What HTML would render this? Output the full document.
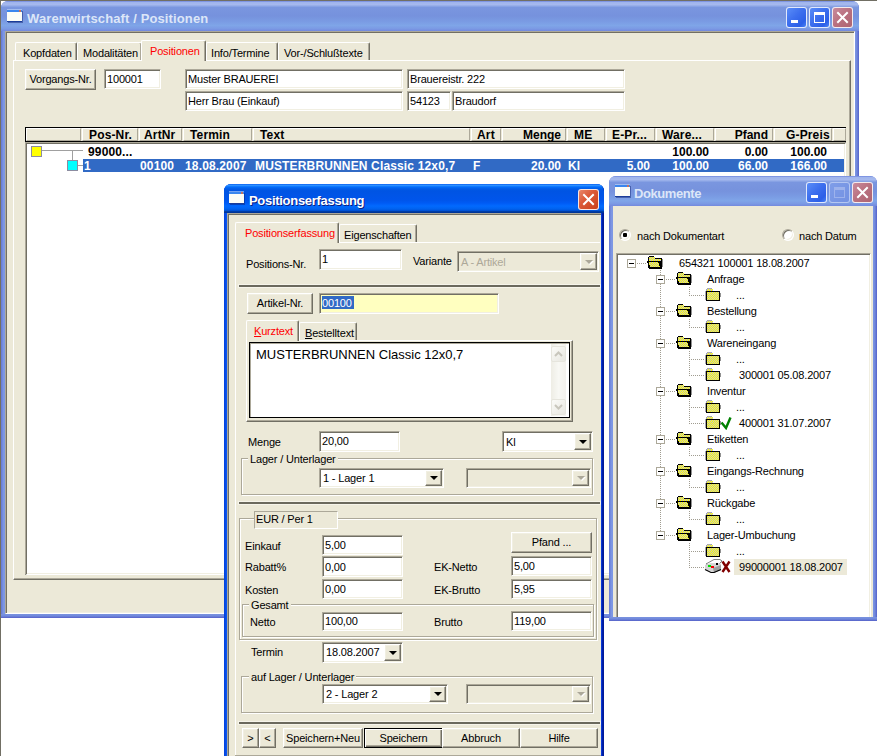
<!DOCTYPE html><html><head><meta charset="utf-8"><style>
html,body{margin:0;padding:0;}
body{width:877px;height:756px;overflow:hidden;position:relative;background:#fff;font-family:"Liberation Sans",sans-serif;font-size:11px;color:#000;}
div,span,svg{position:absolute;box-sizing:border-box;}
.ta{background:linear-gradient(to bottom,#0058EE 0%,#3593FF 4%,#288EFF 6%,#127DFF 8%,#036FFC 10%,#0262EE 14%,#0057E5 20%,#0054E3 24%,#0055EB 56%,#005BF5 66%,#026AFE 76%,#0062EF 86%,#0052D6 92%,#0040AB 94%,#003092 100%);}
.ti{background:linear-gradient(to bottom,#6F86DE 0%,#A0B5EC 5%,#A6B9EE 12%,#8FA8E6 17%,#7A96DF 21%,#7692DD 50%,#7A9BE3 68%,#7FA5E8 82%,#7B9AE4 92%,#7389DE 100%);}
</style></head><body>

<div style="left:0px;top:0px;width:877px;height:1px;background:#716F64;"></div>
<div style="left:0px;top:0px;width:1px;height:756px;background:#716F64;"></div>
<div style="left:1px;top:1px;width:858px;height:617px;background:#7A93DF;border-radius:7px 7px 0 0;overflow:hidden;"><div style="left:0;top:0;width:4px;height:617px;background:linear-gradient(to right,#6479D6,#7C95E2 60%,#7E98E4);"></div><div style="left:854px;top:0;width:4px;height:617px;background:linear-gradient(to right,#7E98E4,#6F86DB 50%,#5462C9);"></div><div style="left:0;top:613px;width:858px;height:4px;background:linear-gradient(to bottom,#7A93DF,#7089DC 50%,#5560C8);"></div><div class="ti" style="left:0;top:0;width:858px;height:30px;"></div></div>
<div style="left:5px;top:31px;width:850px;height:583px;background:#ECE9D8;border-top:1px solid #ACA899;border-left:1px solid #ACA899;border-right:1px solid #fff;border-bottom:1px solid #fff;box-shadow:inset 1px 1px #716F64,inset -1px -1px #F1EFE2;"></div>
<div style="left:7px;top:10px;width:15px;height:12px;background:#FCFDF7;border-top:2px solid #3A86EE;border-bottom:1px solid #1A3C9A;box-shadow:1px 1px 0 rgba(10,30,110,0.45),0 -1px 0 rgba(190,215,250,0.6);"></div><div style="left:19px;top:10px;width:2px;height:2px;background:#F06A30;border-radius:1px"></div>
<div style="left:27px;top:11px;font-size:13px;line-height:15px;color:#DCE6F8;font-weight:bold;-webkit-text-stroke:0;white-space:nowrap;letter-spacing:0.12px;">Warenwirtschaft / Positionen</div>
<div style="left:786px;top:7px;width:21px;height:21px;background:linear-gradient(135deg,#5A8DF8 0%,#3D6FEE 45%,#2C5FE8 80%,#4B84F5 100%);border:1px solid rgba(255,255,255,0.85);border-radius:3px;overflow:hidden;"><div style="left:4px;top:12px;width:7px;height:3px;background:#fff"></div></div>
<div style="left:809px;top:7px;width:21px;height:21px;background:linear-gradient(135deg,#5A8DF8 0%,#3D6FEE 45%,#2C5FE8 80%,#4B84F5 100%);border:1px solid rgba(255,255,255,0.85);border-radius:3px;overflow:hidden;"><div style="left:4px;top:4px;width:11px;height:11px;border:1px solid #fff;border-top-width:3px;"></div></div>
<div style="left:832px;top:7px;width:21px;height:21px;background:linear-gradient(135deg,#C98A9C 0%,#B9707F 50%,#AE6572 100%);border:1px solid rgba(255,255,255,0.85);border-radius:3px;overflow:hidden;"><svg style="left:-1px;top:-1px" width="21" height="21"><path d="M6 6 L15 15 M15 6 L6 15" stroke="#fff" stroke-width="2" stroke-linecap="square"/></svg></div>
<div style="left:13px;top:60px;width:838px;height:520px;border-left:1px solid #fff;border-top:1px solid #fff;border-right:1px solid #716F64;border-bottom:1px solid #716F64;box-shadow:inset -1px -1px #ACA899;"></div>
<div style="left:15px;top:42px;width:62px;height:18px;background:#ECE9D8;border-left:1px solid #fff;border-top:1px solid #fff;border-right:1px solid #716F64;box-shadow:inset -1px 0 #ACA899;border-radius:2px 2px 0 0;"></div>
<div style="left:23px;top:47px;font-size:11px;line-height:13px;color:#000;white-space:nowrap;letter-spacing:-0.17px;">Kopfdaten</div>
<div style="left:77px;top:42px;width:65px;height:18px;background:#ECE9D8;border-left:1px solid #fff;border-top:1px solid #fff;border-right:1px solid #716F64;box-shadow:inset -1px 0 #ACA899;border-radius:2px 2px 0 0;"></div>
<div style="left:83px;top:47px;font-size:11px;line-height:13px;color:#000;white-space:nowrap;letter-spacing:-0.17px;">Modalitäten</div>
<div style="left:206px;top:42px;width:72px;height:18px;background:#ECE9D8;border-left:1px solid #fff;border-top:1px solid #fff;border-right:1px solid #716F64;box-shadow:inset -1px 0 #ACA899;border-radius:2px 2px 0 0;"></div>
<div style="left:211px;top:47px;font-size:11px;line-height:13px;color:#000;white-space:nowrap;letter-spacing:-0.17px;">Info/Termine</div>
<div style="left:278px;top:42px;width:92px;height:18px;background:#ECE9D8;border-left:1px solid #fff;border-top:1px solid #fff;border-right:1px solid #716F64;box-shadow:inset -1px 0 #ACA899;border-radius:2px 2px 0 0;"></div>
<div style="left:284px;top:47px;font-size:11px;line-height:13px;color:#000;white-space:nowrap;letter-spacing:-0.17px;">Vor-/Schlußtexte</div>
<div style="left:141px;top:40px;width:65px;height:21px;background:#ECE9D8;border-left:1px solid #fff;border-top:1px solid #fff;border-right:1px solid #716F64;box-shadow:inset -1px 0 #ACA899;border-radius:2px 2px 0 0;"></div>
<div style="left:150px;top:45px;font-size:11px;line-height:13px;color:#FF0000;white-space:nowrap;letter-spacing:-0.17px;">Positionen</div>
<div style="left:25px;top:69px;width:71px;height:21px;background:#ECE9D8;border:1px solid;border-color:#fff #716F64 #716F64 #fff;box-shadow:inset -1px -1px #ACA899,inset 1px 1px #F1EFE2;"></div>
<div style="left:25px;width:71px;text-align:center;top:73px;font-size:11px;line-height:13px;color:#000;white-space:nowrap;letter-spacing:-0.17px;">Vorgangs-Nr.</div>
<div style="left:104px;top:69px;width:57px;height:20px;background:#fff;border:1px solid;border-color:#ACA899 #fff #fff #ACA899;box-shadow:inset 1px 1px #716F64,inset -1px -1px #F1EFE2;background:#fff;"></div>
<div style="left:107px;top:73px;font-size:11px;line-height:13px;color:#000;white-space:nowrap;letter-spacing:-0.17px;">100001</div>
<div style="left:185px;top:69px;width:218px;height:20px;background:#fff;border:1px solid;border-color:#ACA899 #fff #fff #ACA899;box-shadow:inset 1px 1px #716F64,inset -1px -1px #F1EFE2;background:#fff;"></div>
<div style="left:188px;top:73px;font-size:11px;line-height:13px;color:#000;white-space:nowrap;letter-spacing:-0.17px;">Muster BRAUEREI</div>
<div style="left:407px;top:69px;width:218px;height:20px;background:#fff;border:1px solid;border-color:#ACA899 #fff #fff #ACA899;box-shadow:inset 1px 1px #716F64,inset -1px -1px #F1EFE2;background:#fff;"></div>
<div style="left:410px;top:73px;font-size:11px;line-height:13px;color:#000;white-space:nowrap;letter-spacing:-0.17px;">Brauereistr. 222</div>
<div style="left:185px;top:91px;width:218px;height:20px;background:#fff;border:1px solid;border-color:#ACA899 #fff #fff #ACA899;box-shadow:inset 1px 1px #716F64,inset -1px -1px #F1EFE2;background:#fff;"></div>
<div style="left:188px;top:95px;font-size:11px;line-height:13px;color:#000;white-space:nowrap;letter-spacing:-0.17px;">Herr Brau (Einkauf)</div>
<div style="left:407px;top:91px;width:44px;height:20px;background:#fff;border:1px solid;border-color:#ACA899 #fff #fff #ACA899;box-shadow:inset 1px 1px #716F64,inset -1px -1px #F1EFE2;background:#fff;"></div>
<div style="left:410px;top:95px;font-size:11px;line-height:13px;color:#000;white-space:nowrap;letter-spacing:-0.17px;">54123</div>
<div style="left:452px;top:91px;width:173px;height:20px;background:#fff;border:1px solid;border-color:#ACA899 #fff #fff #ACA899;box-shadow:inset 1px 1px #716F64,inset -1px -1px #F1EFE2;background:#fff;"></div>
<div style="left:455px;top:95px;font-size:11px;line-height:13px;color:#000;white-space:nowrap;letter-spacing:-0.17px;">Braudorf</div>
<div style="left:25px;top:142px;width:821px;height:433px;background:#fff;border-left:2px solid #716F64;border-top:2px solid #716F64;border-right:1px solid #fff;border-bottom:1px solid #fff;box-shadow:inset -1px -1px #F1EFE2;"></div>
<div style="left:25px;top:142px;width:1px;height:432px;background:#ACA899"></div><div style="left:25px;top:142px;width:820px;height:1px;background:#ACA899"></div>
<div style="left:25px;top:127px;width:821px;height:15px;background:#ECE9D8;border:1px solid #000;"></div>
<div style="left:26px;top:128px;width:55px;height:13px;border-left:1px solid #fff;border-top:1px solid #fff;border-right:1px solid #ACA899;border-bottom:1px solid #ACA899;"></div>
<div style="left:82px;top:128px;width:56px;height:13px;border-left:1px solid #fff;border-top:1px solid #fff;border-right:1px solid #ACA899;border-bottom:1px solid #ACA899;"></div>
<div style="left:139px;top:128px;width:43px;height:13px;border-left:1px solid #fff;border-top:1px solid #fff;border-right:1px solid #ACA899;border-bottom:1px solid #ACA899;"></div>
<div style="left:183px;top:128px;width:69px;height:13px;border-left:1px solid #fff;border-top:1px solid #fff;border-right:1px solid #ACA899;border-bottom:1px solid #ACA899;"></div>
<div style="left:253px;top:128px;width:217px;height:13px;border-left:1px solid #fff;border-top:1px solid #fff;border-right:1px solid #ACA899;border-bottom:1px solid #ACA899;"></div>
<div style="left:471px;top:128px;width:30px;height:13px;border-left:1px solid #fff;border-top:1px solid #fff;border-right:1px solid #ACA899;border-bottom:1px solid #ACA899;"></div>
<div style="left:502px;top:128px;width:64px;height:13px;border-left:1px solid #fff;border-top:1px solid #fff;border-right:1px solid #ACA899;border-bottom:1px solid #ACA899;"></div>
<div style="left:567px;top:128px;width:38px;height:13px;border-left:1px solid #fff;border-top:1px solid #fff;border-right:1px solid #ACA899;border-bottom:1px solid #ACA899;"></div>
<div style="left:606px;top:128px;width:49px;height:13px;border-left:1px solid #fff;border-top:1px solid #fff;border-right:1px solid #ACA899;border-bottom:1px solid #ACA899;"></div>
<div style="left:656px;top:128px;width:58px;height:13px;border-left:1px solid #fff;border-top:1px solid #fff;border-right:1px solid #ACA899;border-bottom:1px solid #ACA899;"></div>
<div style="left:715px;top:128px;width:58px;height:13px;border-left:1px solid #fff;border-top:1px solid #fff;border-right:1px solid #ACA899;border-bottom:1px solid #ACA899;"></div>
<div style="left:774px;top:128px;width:58px;height:13px;border-left:1px solid #fff;border-top:1px solid #fff;border-right:1px solid #ACA899;border-bottom:1px solid #ACA899;"></div>
<div style="left:833px;top:128px;width:13px;height:13px;border-left:1px solid #fff;border-top:1px solid #fff;border-right:1px solid #ACA899;border-bottom:1px solid #ACA899;"></div>
<div style="left:89px;top:128px;font-size:12px;line-height:14px;color:#000;font-weight:bold;-webkit-text-stroke:0;white-space:nowrap;letter-spacing:0.15px;">Pos-Nr.</div>
<div style="left:144px;top:128px;font-size:12px;line-height:14px;color:#000;font-weight:bold;-webkit-text-stroke:0;white-space:nowrap;letter-spacing:0.15px;">ArtNr</div>
<div style="left:190px;top:128px;font-size:12px;line-height:14px;color:#000;font-weight:bold;-webkit-text-stroke:0;white-space:nowrap;letter-spacing:0.15px;">Termin</div>
<div style="left:260px;top:128px;font-size:12px;line-height:14px;color:#000;font-weight:bold;-webkit-text-stroke:0;white-space:nowrap;letter-spacing:0.15px;">Text</div>
<div style="left:477px;top:128px;font-size:12px;line-height:14px;color:#000;font-weight:bold;-webkit-text-stroke:0;white-space:nowrap;letter-spacing:0.15px;">Art</div>
<div style="left:574px;top:128px;font-size:12px;line-height:14px;color:#000;font-weight:bold;-webkit-text-stroke:0;white-space:nowrap;letter-spacing:0.15px;">ME</div>
<div style="left:612px;top:128px;font-size:12px;line-height:14px;color:#000;font-weight:bold;-webkit-text-stroke:0;white-space:nowrap;letter-spacing:0.15px;">E-Pr...</div>
<div style="left:662px;top:128px;font-size:12px;line-height:14px;color:#000;font-weight:bold;-webkit-text-stroke:0;white-space:nowrap;letter-spacing:0.15px;">Ware...</div>
<div style="left:786px;top:128px;font-size:12px;line-height:14px;color:#000;font-weight:bold;-webkit-text-stroke:0;white-space:nowrap;letter-spacing:0.15px;">G-Preis</div>
<div style="left:261px;width:300px;text-align:right;top:128px;font-size:12px;line-height:14px;color:#000;font-weight:bold;-webkit-text-stroke:0;white-space:nowrap;">Menge</div>
<div style="left:468px;width:300px;text-align:right;top:128px;font-size:12px;line-height:14px;color:#000;font-weight:bold;-webkit-text-stroke:0;white-space:nowrap;">Pfand</div>
<div style="left:31px;top:146px;width:11px;height:11px;background:#FFFF00;border:1px solid #8C8CA0;"></div>
<div style="left:42px;top:150px;width:41px;height:1px;background:#A0A0A0;"></div>
<div style="left:72px;top:151px;width:1px;height:9px;background:#A0A0A0;"></div>
<div style="left:67px;top:160px;width:11px;height:11px;background:#00FFFF;border:1px solid #8C8CA0;"></div>
<div style="left:78px;top:165px;width:5px;height:1px;background:#A0A0A0;"></div>
<div style="left:88px;top:145px;font-size:12px;line-height:14px;color:#000;font-weight:bold;-webkit-text-stroke:0;white-space:nowrap;letter-spacing:0.15px;">99000...</div>
<div style="left:409px;width:300px;text-align:right;top:145px;font-size:12px;line-height:14px;color:#000;font-weight:bold;-webkit-text-stroke:0;white-space:nowrap;">100.00</div>
<div style="left:468px;width:300px;text-align:right;top:145px;font-size:12px;line-height:14px;color:#000;font-weight:bold;-webkit-text-stroke:0;white-space:nowrap;">0.00</div>
<div style="left:527px;width:300px;text-align:right;top:145px;font-size:12px;line-height:14px;color:#000;font-weight:bold;-webkit-text-stroke:0;white-space:nowrap;">100.00</div>
<div style="left:83px;top:159px;width:761px;height:13px;background:#316AC5;"></div>
<div style="left:84px;top:159px;font-size:12px;line-height:14px;color:#fff;font-weight:bold;-webkit-text-stroke:0;white-space:nowrap;letter-spacing:0.15px;">1</div>
<div style="left:140px;top:159px;font-size:12px;line-height:14px;color:#fff;font-weight:bold;-webkit-text-stroke:0;white-space:nowrap;letter-spacing:0.15px;">00100</div>
<div style="left:185px;top:159px;font-size:12px;line-height:14px;color:#fff;font-weight:bold;-webkit-text-stroke:0;white-space:nowrap;letter-spacing:0.15px;">18.08.2007</div>
<div style="left:255px;top:159px;font-size:12px;line-height:14px;color:#fff;font-weight:bold;-webkit-text-stroke:0;white-space:nowrap;letter-spacing:0.15px;">MUSTERBRUNNEN Classic 12x0,7</div>
<div style="left:473px;top:159px;font-size:12px;line-height:14px;color:#fff;font-weight:bold;-webkit-text-stroke:0;white-space:nowrap;letter-spacing:0.15px;">F</div>
<div style="left:261px;width:300px;text-align:right;top:159px;font-size:12px;line-height:14px;color:#fff;font-weight:bold;-webkit-text-stroke:0;white-space:nowrap;">20.00</div>
<div style="left:568px;top:159px;font-size:12px;line-height:14px;color:#fff;font-weight:bold;-webkit-text-stroke:0;white-space:nowrap;letter-spacing:0.15px;">Kl</div>
<div style="left:350px;width:300px;text-align:right;top:159px;font-size:12px;line-height:14px;color:#fff;font-weight:bold;-webkit-text-stroke:0;white-space:nowrap;">5.00</div>
<div style="left:409px;width:300px;text-align:right;top:159px;font-size:12px;line-height:14px;color:#fff;font-weight:bold;-webkit-text-stroke:0;white-space:nowrap;">100.00</div>
<div style="left:468px;width:300px;text-align:right;top:159px;font-size:12px;line-height:14px;color:#fff;font-weight:bold;-webkit-text-stroke:0;white-space:nowrap;">66.00</div>
<div style="left:527px;width:300px;text-align:right;top:159px;font-size:12px;line-height:14px;color:#fff;font-weight:bold;-webkit-text-stroke:0;white-space:nowrap;">166.00</div>
<div style="left:224px;top:184px;width:380px;height:600px;background:#0848EA;border-radius:7px 7px 0 0;overflow:hidden;"><div class="ta" style="left:0;top:0;width:380px;height:29px;"></div><div style="left:377px;top:0;width:3px;height:600px;background:linear-gradient(to right,#0A4AF0,#0020B0 40%,#001890);"></div><div style="left:0;top:0;width:3px;height:600px;background:linear-gradient(to right,#0440D8,#0A58F5);"></div><div class="ta" style="left:0;top:0;width:380px;height:29px;border-radius:7px 7px 0 0"></div></div>
<div style="left:227px;top:213px;width:374px;height:560px;background:#ECE9D8;border-top:1px solid #ACA899;border-left:1px solid #ACA899;box-shadow:inset 1px 1px #716F64;"></div>
<div style="left:229px;top:192px;width:15px;height:12px;background:#FCFDF7;border-top:2px solid #3A86EE;border-bottom:1px solid #1A3C9A;box-shadow:1px 1px 0 rgba(10,30,110,0.45),0 -1px 0 rgba(190,215,250,0.6);"></div><div style="left:241px;top:192px;width:2px;height:2px;background:#F06A30;border-radius:1px"></div>
<div style="left:249px;top:193px;font-size:13px;line-height:15px;font-weight:bold;-webkit-text-stroke:0;color:#fff;white-space:nowrap;letter-spacing:-0.3px;text-shadow:1px 1px #0A1E80;">Positionserfassung</div>
<div style="left:578px;top:189px;width:21px;height:21px;background:linear-gradient(135deg,#E8876B 0%,#DC5B3A 40%,#C9401A 100%);border:1px solid rgba(255,255,255,0.85);border-radius:3px;overflow:hidden;"><svg style="left:-1px;top:-1px" width="21" height="21"><path d="M6 6 L15 15 M15 6 L6 15" stroke="#fff" stroke-width="2" stroke-linecap="square"/></svg></div>
<div style="left:235px;top:242px;width:365px;height:520px;border-left:1px solid #fff;border-top:1px solid #fff;"></div>
<div style="left:339px;top:224px;width:78px;height:18px;background:#ECE9D8;border-left:1px solid #fff;border-top:1px solid #fff;border-right:1px solid #716F64;box-shadow:inset -1px 0 #ACA899;border-radius:2px 2px 0 0;"></div>
<div style="left:344px;top:229px;font-size:11px;line-height:13px;color:#000;white-space:nowrap;letter-spacing:-0.17px;">Eigenschaften</div>
<div style="left:235px;top:222px;width:104px;height:21px;background:#ECE9D8;border-left:1px solid #fff;border-top:1px solid #fff;border-right:1px solid #716F64;box-shadow:inset -1px 0 #ACA899;border-radius:2px 2px 0 0;"></div>
<div style="left:245px;top:227px;font-size:11px;line-height:13px;color:#FF0000;white-space:nowrap;letter-spacing:-0.17px;">Positionserfassung</div>
<div style="left:246px;top:258px;font-size:11px;line-height:13px;color:#000;white-space:nowrap;letter-spacing:-0.17px;">Positions-Nr.</div>
<div style="left:319px;top:249px;width:83px;height:21px;background:#fff;border:1px solid;border-color:#ACA899 #fff #fff #ACA899;box-shadow:inset 1px 1px #716F64,inset -1px -1px #F1EFE2;background:#fff;"></div>
<div style="left:322px;top:253px;font-size:11px;line-height:13px;color:#000;white-space:nowrap;letter-spacing:-0.17px;">1</div>
<div style="left:413px;top:255px;font-size:11px;line-height:13px;color:#000;white-space:nowrap;letter-spacing:-0.17px;">Variante</div>
<div style="left:457px;top:251px;width:142px;height:21px;background:#fff;border:1px solid;border-color:#ACA899 #fff #fff #ACA899;box-shadow:inset 1px 1px #716F64,inset -1px -1px #F1EFE2;background:#ECE9D8;"></div>
<div style="left:580px;top:253px;width:17px;height:17px;background:#ECE9D8;border:1px solid;border-color:#fff #716F64 #716F64 #fff;box-shadow:inset -1px -1px #ACA899,inset 1px 1px #F1EFE2;"></div>
<div style="left:586px;top:261px;width:0;height:0;border-left:4px solid transparent;border-right:4px solid transparent;border-top:4px solid #fff;"></div>
<div style="left:585px;top:260px;width:0;height:0;border-left:4px solid transparent;border-right:4px solid transparent;border-top:4px solid #ACA899;"></div>
<div style="left:461px;top:256px;font-size:11px;line-height:13px;color:#ACA899;white-space:nowrap;letter-spacing:-0.17px;">A - Artikel</div>
<div style="left:238px;top:284px;width:363px;height:4px;background:#F6F4EA;"></div>
<div style="left:239px;top:285px;width:361px;height:2px;background:#6B695D;"></div>
<div style="left:247px;top:293px;width:66px;height:21px;background:#ECE9D8;border:1px solid;border-color:#fff #716F64 #716F64 #fff;box-shadow:inset -1px -1px #ACA899,inset 1px 1px #F1EFE2;"></div>
<div style="left:247px;width:66px;text-align:center;top:297px;font-size:11px;line-height:13px;color:#000;white-space:nowrap;letter-spacing:-0.17px;">Artikel-Nr.</div>
<div style="left:319px;top:293px;width:180px;height:21px;background:#fff;border:1px solid;border-color:#ACA899 #fff #fff #ACA899;box-shadow:inset 1px 1px #716F64,inset -1px -1px #F1EFE2;background:#FFFFC0;"></div>
<div style="left:322px;top:296px;width:32px;height:13px;background:#316AC5;"></div>
<div style="left:322px;top:297px;font-size:11px;line-height:13px;color:#fff;white-space:nowrap;letter-spacing:-0.17px;">00100</div>
<div style="left:246px;top:340px;width:327px;height:82px;border-left:1px solid #fff;border-top:1px solid #fff;border-right:1px solid #716F64;border-bottom:1px solid #716F64;box-shadow:inset -1px -1px #ACA899;"></div>
<div style="left:299px;top:322px;width:58px;height:18px;background:#ECE9D8;border-left:1px solid #fff;border-top:1px solid #fff;border-right:1px solid #716F64;box-shadow:inset -1px 0 #ACA899;border-radius:2px 2px 0 0;"></div>
<div style="left:305px;top:327px;font-size:11px;line-height:13px;color:#000;white-space:nowrap;letter-spacing:-0.17px;"><u>B</u>estelltext</div>
<div style="left:246px;top:320px;width:53px;height:21px;background:#ECE9D8;border-left:1px solid #fff;border-top:1px solid #fff;border-right:1px solid #716F64;box-shadow:inset -1px 0 #ACA899;border-radius:2px 2px 0 0;"></div>
<div style="left:254px;top:325px;font-size:11px;line-height:13px;color:#FF0000;white-space:nowrap;letter-spacing:-0.17px;"><u>K</u>urztext</div>
<div style="left:249px;top:342px;width:321px;height:76px;background:#fff;border:1px solid #000;box-shadow:inset 1px 1px #ACA899;"></div>
<div style="left:256px;top:347px;font-size:13px;line-height:15px;color:#000;white-space:nowrap;letter-spacing:0px;">MUSTERBRUNNEN Classic 12x0,7</div>
<div style="left:551px;top:344px;width:15px;height:72px;background:linear-gradient(to right,#EEEDE5,#F8F8F4 50%,#F3F1EC);"></div>
<div style="left:551px;top:346px;width:15px;height:16px;background:linear-gradient(135deg,#FBFBF8,#E8E7E0);border:1px solid #E6E5DD;border-radius:2px;"></div>
<svg style="left:551px;top:346px" width="15" height="16"><path d="M4 10 L7.5 6.5 L11 10" stroke="#C8C6BC" stroke-width="2" fill="none"/></svg>
<div style="left:551px;top:399px;width:15px;height:16px;background:linear-gradient(135deg,#FBFBF8,#E8E7E0);border:1px solid #E6E5DD;border-radius:2px;"></div>
<svg style="left:551px;top:399px" width="15" height="16"><path d="M4 6 L7.5 9.5 L11 6" stroke="#C8C6BC" stroke-width="2" fill="none"/></svg>
<div style="left:248px;top:436px;font-size:11px;line-height:13px;color:#000;white-space:nowrap;letter-spacing:-0.17px;">Menge</div>
<div style="left:319px;top:431px;width:81px;height:21px;background:#fff;border:1px solid;border-color:#ACA899 #fff #fff #ACA899;box-shadow:inset 1px 1px #716F64,inset -1px -1px #F1EFE2;background:#fff;"></div>
<div style="left:322px;top:435px;font-size:11px;line-height:13px;color:#000;white-space:nowrap;letter-spacing:-0.17px;">20,00</div>
<div style="left:502px;top:431px;width:91px;height:21px;background:#fff;border:1px solid;border-color:#ACA899 #fff #fff #ACA899;box-shadow:inset 1px 1px #716F64,inset -1px -1px #F1EFE2;background:#fff;"></div>
<div style="left:574px;top:433px;width:17px;height:17px;background:#ECE9D8;border:1px solid;border-color:#fff #716F64 #716F64 #fff;box-shadow:inset -1px -1px #ACA899,inset 1px 1px #F1EFE2;"></div>
<div style="left:579px;top:440px;width:0;height:0;border-left:4px solid transparent;border-right:4px solid transparent;border-top:4px solid #000;"></div>
<div style="left:506px;top:436px;font-size:11px;line-height:13px;color:#000;white-space:nowrap;letter-spacing:-0.17px;">Kl</div>
<div style="left:241px;top:458px;width:352px;height:37px;border:1px solid #ACA899;box-shadow:inset 1px 1px #fff,1px 1px #fff;"></div>
<div style="left:248px;top:453px;height:10px;background:#ECE9D8;padding:0 2px;font-size:11px;line-height:13px;white-space:nowrap;letter-spacing:-0.17px;color:transparent">Lager / Unterlager</div>
<div style="left:250px;top:453px;font-size:11px;line-height:13px;color:#000;white-space:nowrap;letter-spacing:-0.17px;">Lager / Unterlager</div>
<div style="left:319px;top:468px;width:125px;height:20px;background:#fff;border:1px solid;border-color:#ACA899 #fff #fff #ACA899;box-shadow:inset 1px 1px #716F64,inset -1px -1px #F1EFE2;background:#fff;"></div>
<div style="left:425px;top:470px;width:17px;height:16px;background:#ECE9D8;border:1px solid;border-color:#fff #716F64 #716F64 #fff;box-shadow:inset -1px -1px #ACA899,inset 1px 1px #F1EFE2;"></div>
<div style="left:430px;top:476px;width:0;height:0;border-left:4px solid transparent;border-right:4px solid transparent;border-top:4px solid #000;"></div>
<div style="left:323px;top:472px;font-size:11px;line-height:13px;color:#000;white-space:nowrap;letter-spacing:-0.17px;">1 - Lager 1</div>
<div style="left:466px;top:468px;width:125px;height:20px;background:#fff;border:1px solid;border-color:#ACA899 #fff #fff #ACA899;box-shadow:inset 1px 1px #716F64,inset -1px -1px #F1EFE2;background:#ECE9D8;"></div>
<div style="left:572px;top:470px;width:17px;height:16px;background:#ECE9D8;border:1px solid;border-color:#fff #716F64 #716F64 #fff;box-shadow:inset -1px -1px #ACA899,inset 1px 1px #F1EFE2;"></div>
<div style="left:578px;top:477px;width:0;height:0;border-left:4px solid transparent;border-right:4px solid transparent;border-top:4px solid #fff;"></div>
<div style="left:577px;top:476px;width:0;height:0;border-left:4px solid transparent;border-right:4px solid transparent;border-top:4px solid #ACA899;"></div>
<div style="left:238px;top:501px;width:363px;height:4px;background:#F6F4EA;"></div>
<div style="left:239px;top:502px;width:361px;height:2px;background:#6B695D;"></div>
<div style="left:239px;top:518px;width:358px;height:122px;border:1px solid #ACA899;box-shadow:inset 1px 1px #fff,1px 1px #fff;"></div>
<div style="left:254px;top:511px;width:84px;height:18px;background:#ECE9D8;border:1px solid;border-color:#ACA899 #fff #fff #ACA899;"></div>
<div style="left:256px;top:513px;font-size:11px;line-height:13px;color:#000;white-space:nowrap;letter-spacing:-0.17px;">EUR / Per 1</div>
<div style="left:245px;top:540px;font-size:11px;line-height:13px;color:#000;white-space:nowrap;letter-spacing:-0.17px;">Einkauf</div>
<div style="left:322px;top:535px;width:81px;height:20px;background:#fff;border:1px solid;border-color:#ACA899 #fff #fff #ACA899;box-shadow:inset 1px 1px #716F64,inset -1px -1px #F1EFE2;background:#fff;"></div>
<div style="left:325px;top:539px;font-size:11px;line-height:13px;color:#000;white-space:nowrap;letter-spacing:-0.17px;">5,00</div>
<div style="left:245px;top:561px;font-size:11px;line-height:13px;color:#000;white-space:nowrap;letter-spacing:-0.17px;">Rabatt%</div>
<div style="left:322px;top:556px;width:81px;height:21px;background:#fff;border:1px solid;border-color:#ACA899 #fff #fff #ACA899;box-shadow:inset 1px 1px #716F64,inset -1px -1px #F1EFE2;background:#fff;"></div>
<div style="left:325px;top:561px;font-size:11px;line-height:13px;color:#000;white-space:nowrap;letter-spacing:-0.17px;">0,00</div>
<div style="left:245px;top:584px;font-size:11px;line-height:13px;color:#000;white-space:nowrap;letter-spacing:-0.17px;">Kosten</div>
<div style="left:322px;top:579px;width:81px;height:20px;background:#fff;border:1px solid;border-color:#ACA899 #fff #fff #ACA899;box-shadow:inset 1px 1px #716F64,inset -1px -1px #F1EFE2;background:#fff;"></div>
<div style="left:325px;top:583px;font-size:11px;line-height:13px;color:#000;white-space:nowrap;letter-spacing:-0.17px;">0,00</div>
<div style="left:511px;top:532px;width:81px;height:21px;background:#ECE9D8;border:1px solid;border-color:#fff #716F64 #716F64 #fff;box-shadow:inset -1px -1px #ACA899,inset 1px 1px #F1EFE2;"></div>
<div style="left:511px;width:81px;text-align:center;top:536px;font-size:11px;line-height:13px;color:#000;white-space:nowrap;letter-spacing:-0.17px;">Pfand ...</div>
<div style="left:434px;top:561px;font-size:11px;line-height:13px;color:#000;white-space:nowrap;letter-spacing:-0.17px;">EK-Netto</div>
<div style="left:511px;top:556px;width:81px;height:20px;background:#fff;border:1px solid;border-color:#ACA899 #fff #fff #ACA899;box-shadow:inset 1px 1px #716F64,inset -1px -1px #F1EFE2;background:#fff;"></div>
<div style="left:514px;top:560px;font-size:11px;line-height:13px;color:#000;white-space:nowrap;letter-spacing:-0.17px;">5,00</div>
<div style="left:434px;top:584px;font-size:11px;line-height:13px;color:#000;white-space:nowrap;letter-spacing:-0.17px;">EK-Brutto</div>
<div style="left:511px;top:579px;width:81px;height:20px;background:#fff;border:1px solid;border-color:#ACA899 #fff #fff #ACA899;box-shadow:inset 1px 1px #716F64,inset -1px -1px #F1EFE2;background:#fff;"></div>
<div style="left:514px;top:583px;font-size:11px;line-height:13px;color:#000;white-space:nowrap;letter-spacing:-0.17px;">5,95</div>
<div style="left:242px;top:604px;width:352px;height:33px;border:1px solid #ACA899;box-shadow:inset 1px 1px #fff,1px 1px #fff;"></div>
<div style="left:249px;top:599px;height:10px;background:#ECE9D8;padding:0 2px;font-size:11px;line-height:13px;white-space:nowrap;letter-spacing:-0.17px;color:transparent">Gesamt</div>
<div style="left:251px;top:599px;font-size:11px;line-height:13px;color:#000;white-space:nowrap;letter-spacing:-0.17px;">Gesamt</div>
<div style="left:250px;top:616px;font-size:11px;line-height:13px;color:#000;white-space:nowrap;letter-spacing:-0.17px;">Netto</div>
<div style="left:322px;top:612px;width:81px;height:19px;background:#fff;border:1px solid;border-color:#ACA899 #fff #fff #ACA899;box-shadow:inset 1px 1px #716F64,inset -1px -1px #F1EFE2;background:#fff;"></div>
<div style="left:325px;top:615px;font-size:11px;line-height:13px;color:#000;white-space:nowrap;letter-spacing:-0.17px;">100,00</div>
<div style="left:434px;top:616px;font-size:11px;line-height:13px;color:#000;white-space:nowrap;letter-spacing:-0.17px;">Brutto</div>
<div style="left:511px;top:611px;width:81px;height:20px;background:#fff;border:1px solid;border-color:#ACA899 #fff #fff #ACA899;box-shadow:inset 1px 1px #716F64,inset -1px -1px #F1EFE2;background:#fff;"></div>
<div style="left:514px;top:615px;font-size:11px;line-height:13px;color:#000;white-space:nowrap;letter-spacing:-0.17px;">119,00</div>
<div style="left:251px;top:646px;font-size:11px;line-height:13px;color:#000;white-space:nowrap;letter-spacing:-0.17px;">Termin</div>
<div style="left:322px;top:642px;width:81px;height:21px;background:#fff;border:1px solid;border-color:#ACA899 #fff #fff #ACA899;box-shadow:inset 1px 1px #716F64,inset -1px -1px #F1EFE2;background:#fff;"></div>
<div style="left:384px;top:644px;width:17px;height:17px;background:#ECE9D8;border:1px solid;border-color:#fff #716F64 #716F64 #fff;box-shadow:inset -1px -1px #ACA899,inset 1px 1px #F1EFE2;"></div>
<div style="left:389px;top:651px;width:0;height:0;border-left:4px solid transparent;border-right:4px solid transparent;border-top:4px solid #000;"></div>
<div style="left:326px;top:646px;font-size:11px;line-height:13px;color:#000;white-space:nowrap;letter-spacing:-0.17px;">18.08.2007</div>
<div style="left:241px;top:676px;width:352px;height:37px;border:1px solid #ACA899;box-shadow:inset 1px 1px #fff,1px 1px #fff;"></div>
<div style="left:249px;top:671px;height:10px;background:#ECE9D8;padding:0 2px;font-size:11px;line-height:13px;white-space:nowrap;letter-spacing:-0.17px;color:transparent">auf Lager / Unterlager</div>
<div style="left:251px;top:671px;font-size:11px;line-height:13px;color:#000;white-space:nowrap;letter-spacing:-0.17px;">auf Lager / Unterlager</div>
<div style="left:322px;top:684px;width:126px;height:20px;background:#fff;border:1px solid;border-color:#ACA899 #fff #fff #ACA899;box-shadow:inset 1px 1px #716F64,inset -1px -1px #F1EFE2;background:#fff;"></div>
<div style="left:429px;top:686px;width:17px;height:16px;background:#ECE9D8;border:1px solid;border-color:#fff #716F64 #716F64 #fff;box-shadow:inset -1px -1px #ACA899,inset 1px 1px #F1EFE2;"></div>
<div style="left:434px;top:692px;width:0;height:0;border-left:4px solid transparent;border-right:4px solid transparent;border-top:4px solid #000;"></div>
<div style="left:326px;top:688px;font-size:11px;line-height:13px;color:#000;white-space:nowrap;letter-spacing:-0.17px;">2 - Lager 2</div>
<div style="left:466px;top:684px;width:125px;height:20px;background:#fff;border:1px solid;border-color:#ACA899 #fff #fff #ACA899;box-shadow:inset 1px 1px #716F64,inset -1px -1px #F1EFE2;background:#ECE9D8;"></div>
<div style="left:572px;top:686px;width:17px;height:16px;background:#ECE9D8;border:1px solid;border-color:#fff #716F64 #716F64 #fff;box-shadow:inset -1px -1px #ACA899,inset 1px 1px #F1EFE2;"></div>
<div style="left:578px;top:693px;width:0;height:0;border-left:4px solid transparent;border-right:4px solid transparent;border-top:4px solid #fff;"></div>
<div style="left:577px;top:692px;width:0;height:0;border-left:4px solid transparent;border-right:4px solid transparent;border-top:4px solid #ACA899;"></div>
<div style="left:238px;top:721px;width:363px;height:4px;background:#F6F4EA;"></div>
<div style="left:239px;top:722px;width:361px;height:2px;background:#6B695D;"></div>
<div style="left:242px;top:728px;width:17px;height:20px;background:#ECE9D8;border:1px solid;border-color:#fff #716F64 #716F64 #fff;box-shadow:inset -1px -1px #ACA899,inset 1px 1px #F1EFE2;"></div>
<div style="left:242px;width:17px;text-align:center;top:732px;font-size:11px;line-height:13px;color:#000;white-space:nowrap;letter-spacing:-0.17px;">&gt;</div>
<div style="left:259px;top:728px;width:17px;height:20px;background:#ECE9D8;border:1px solid;border-color:#fff #716F64 #716F64 #fff;box-shadow:inset -1px -1px #ACA899,inset 1px 1px #F1EFE2;"></div>
<div style="left:259px;width:17px;text-align:center;top:732px;font-size:11px;line-height:13px;color:#000;white-space:nowrap;letter-spacing:-0.17px;">&lt;</div>
<div style="left:283px;top:728px;width:80px;height:20px;background:#ECE9D8;border:1px solid;border-color:#fff #716F64 #716F64 #fff;box-shadow:inset -1px -1px #ACA899,inset 1px 1px #F1EFE2;"></div>
<div style="left:283px;width:80px;text-align:center;top:732px;font-size:11px;line-height:13px;color:#000;white-space:nowrap;letter-spacing:-0.17px;">Speichern+Neu</div>
<div style="left:364px;top:728px;width:79px;height:20px;background:#ECE9D8;border:1px solid #000;box-shadow:inset 1px 1px #fff,inset -1px -1px #716F64,inset -2px -2px #ACA899;"></div>
<div style="left:364px;width:79px;text-align:center;top:732px;font-size:11px;line-height:13px;color:#000;white-space:nowrap;letter-spacing:-0.17px;">Speichern</div>
<div style="left:442px;top:728px;width:78px;height:20px;background:#ECE9D8;border:1px solid;border-color:#fff #716F64 #716F64 #fff;box-shadow:inset -1px -1px #ACA899,inset 1px 1px #F1EFE2;"></div>
<div style="left:442px;width:78px;text-align:center;top:732px;font-size:11px;line-height:13px;color:#000;white-space:nowrap;letter-spacing:-0.17px;">Abbruch</div>
<div style="left:520px;top:728px;width:78px;height:20px;background:#ECE9D8;border:1px solid;border-color:#fff #716F64 #716F64 #fff;box-shadow:inset -1px -1px #ACA899,inset 1px 1px #F1EFE2;"></div>
<div style="left:520px;width:78px;text-align:center;top:732px;font-size:11px;line-height:13px;color:#000;white-space:nowrap;letter-spacing:-0.17px;">Hilfe</div>
<div style="left:235px;top:755px;width:366px;height:1px;background:#ACA899;"></div>
<div style="left:609px;top:176px;width:268px;height:445px;background:#7A93DF;border-radius:7px 7px 0 0;overflow:hidden;"><div style="left:0;top:0;width:4px;height:445px;background:linear-gradient(to right,#6479D6,#7C95E2 60%,#7E98E4);"></div><div style="left:264px;top:0;width:4px;height:445px;background:linear-gradient(to right,#7E98E4,#6F86DB 50%,#5462C9);"></div><div style="left:0;top:441px;width:268px;height:4px;background:linear-gradient(to bottom,#7A93DF,#7089DC 50%,#5560C8);"></div><div class="ti" style="left:0;top:0;width:268px;height:30px;"></div></div>
<div style="left:613px;top:206px;width:260px;height:411px;background:#ECE9D8;"></div>
<div style="left:615px;top:185px;width:15px;height:12px;background:#FCFDF7;border-top:2px solid #3A86EE;border-bottom:1px solid #1A3C9A;box-shadow:1px 1px 0 rgba(10,30,110,0.45),0 -1px 0 rgba(190,215,250,0.6);"></div><div style="left:627px;top:185px;width:2px;height:2px;background:#F06A30;border-radius:1px"></div>
<div style="left:634px;top:186px;font-size:13px;line-height:15px;color:#DCE6F8;font-weight:bold;-webkit-text-stroke:0;white-space:nowrap;letter-spacing:-0.42px;">Dokumente</div>
<div style="left:806px;top:182px;width:21px;height:21px;background:linear-gradient(135deg,#5A8DF8 0%,#3D6FEE 45%,#2C5FE8 80%,#4B84F5 100%);border:1px solid rgba(255,255,255,0.85);border-radius:3px;overflow:hidden;"><div style="left:4px;top:12px;width:7px;height:3px;background:#fff"></div></div>
<div style="left:829px;top:182px;width:21px;height:21px;background:linear-gradient(135deg,#7F9DE8 0%,#7391E2 100%);border:1px solid rgba(220,230,250,0.6);border-radius:3px;overflow:hidden;"><div style="left:4px;top:4px;width:11px;height:11px;border:1px solid #9DB2EC;border-top-width:3px;"></div></div>
<div style="left:852px;top:182px;width:21px;height:21px;background:linear-gradient(135deg,#C98A9C 0%,#B9707F 50%,#AE6572 100%);border:1px solid rgba(255,255,255,0.85);border-radius:3px;overflow:hidden;"><svg style="left:-1px;top:-1px" width="21" height="21"><path d="M6 6 L15 15 M15 6 L6 15" stroke="#fff" stroke-width="2" stroke-linecap="square"/></svg></div>
<div style="left:619px;top:229px;width:12px;height:12px;border-radius:50%;background:#fff;border:1px solid;border-color:#ACA899 #fff #fff #ACA899;box-shadow:inset 1px 1px #716F64,inset -1px -1px #F1EFE2;"></div>
<div style="left:623px;top:233px;width:4px;height:4px;border-radius:1px;background:#000;"></div>
<div style="left:637px;top:230px;font-size:11px;line-height:13px;color:#000;white-space:nowrap;letter-spacing:-0.17px;">nach Dokumentart</div>
<div style="left:782px;top:229px;width:12px;height:12px;border-radius:50%;background:#fff;border:1px solid;border-color:#ACA899 #fff #fff #ACA899;box-shadow:inset 1px 1px #716F64,inset -1px -1px #F1EFE2;"></div>
<div style="left:799px;top:230px;font-size:11px;line-height:13px;color:#000;white-space:nowrap;letter-spacing:-0.17px;">nach Datum</div>
<div style="left:616px;top:253px;width:255px;height:364px;background:#fff;border-top:1px solid #ACA899;border-left:1px solid #ACA899;border-right:1px solid #fff;box-shadow:inset 1px 1px #716F64,inset -1px 0 #F1EFE2;"></div>
<svg style="left:0;top:0" width="0" height="0"><defs><pattern id="dy" width="2" height="2" patternUnits="userSpaceOnUse"><rect width="2" height="2" fill="#FFFF00"/><rect x="1" y="0" width="1" height="1" fill="#C4C4CC"/><rect x="0" y="1" width="1" height="1" fill="#C4C4CC"/></pattern></defs></svg>
<div style="left:627px;top:259px;width:9px;height:9px;background:#fff;border:1px solid #ACA899;"></div><div style="left:629px;top:263px;width:5px;height:1px;background:#000;"></div>
<div style="left:637px;top:263px;width:10px;height:1px;background:repeating-linear-gradient(to right,#A09C90 0 1px,transparent 1px 2px);"></div>
<svg style="left:647px;top:256px" width="17" height="13" viewBox="0 0 17 13" shape-rendering="crispEdges"><path d="M1 1 H2 V0 H7 V1 H8 V2 H15 V13 H2 V12 H1 Z" fill="#000"/><rect x="2" y="1" width="6" height="4" fill="url(#dy)"/><rect x="8" y="3" width="6" height="2" fill="url(#dy)"/><path d="M0 5 H12 L14.5 11 H2 Z" fill="#000"/><path d="M2 6 H11 L13 11 H3 Z" fill="url(#dy)"/><rect x="15" y="3" width="1" height="8" fill="#909090"/></svg>
<div style="left:679px;top:257px;font-size:11px;line-height:13px;color:#000;white-space:nowrap;letter-spacing:-0.17px;">654321 100001 18.08.2007</div>
<div style="left:660px;top:270px;width:1px;height:261px;background:repeating-linear-gradient(to bottom,#A09C90 0 1px,transparent 1px 2px);"></div>
<div style="left:656px;top:275px;width:9px;height:9px;background:#fff;border:1px solid #ACA899;"></div><div style="left:658px;top:279px;width:5px;height:1px;background:#000;"></div>
<div style="left:666px;top:279px;width:10px;height:1px;background:repeating-linear-gradient(to right,#A09C90 0 1px,transparent 1px 2px);"></div>
<svg style="left:676px;top:272px" width="17" height="13" viewBox="0 0 17 13" shape-rendering="crispEdges"><path d="M1 1 H2 V0 H7 V1 H8 V2 H15 V13 H2 V12 H1 Z" fill="#000"/><rect x="2" y="1" width="6" height="4" fill="url(#dy)"/><rect x="8" y="3" width="6" height="2" fill="url(#dy)"/><path d="M0 5 H12 L14.5 11 H2 Z" fill="#000"/><path d="M2 6 H11 L13 11 H3 Z" fill="url(#dy)"/><rect x="15" y="3" width="1" height="8" fill="#909090"/></svg>
<div style="left:707px;top:273px;font-size:11px;line-height:13px;color:#000;white-space:nowrap;letter-spacing:-0.17px;">Anfrage</div>
<div style="left:689px;top:287px;width:1px;height:9px;background:repeating-linear-gradient(to bottom,#A09C90 0 1px,transparent 1px 2px);"></div>
<div style="left:691px;top:295px;width:14px;height:1px;background:repeating-linear-gradient(to right,#A09C90 0 1px,transparent 1px 2px);"></div>
<svg style="left:705px;top:288px" width="17" height="13" viewBox="0 0 17 13" shape-rendering="crispEdges"><path d="M0 3 H1 V1 H2 V0 H7 V1 H8 V3 H14 V12 H0 Z" fill="#A8A8B0"/><rect x="2" y="1" width="6" height="2" fill="url(#dy)"/><rect x="1" y="3" width="14" height="10" fill="#000"/><rect x="2" y="4" width="12" height="8" fill="url(#dy)"/><rect x="15" y="5" width="1" height="4" fill="#909090"/></svg>
<div style="left:736px;top:289px;font-size:11px;line-height:13px;color:#000;white-space:nowrap;letter-spacing:-0.17px;">...</div>
<div style="left:656px;top:307px;width:9px;height:9px;background:#fff;border:1px solid #ACA899;"></div><div style="left:658px;top:311px;width:5px;height:1px;background:#000;"></div>
<div style="left:666px;top:311px;width:10px;height:1px;background:repeating-linear-gradient(to right,#A09C90 0 1px,transparent 1px 2px);"></div>
<svg style="left:676px;top:304px" width="17" height="13" viewBox="0 0 17 13" shape-rendering="crispEdges"><path d="M1 1 H2 V0 H7 V1 H8 V2 H15 V13 H2 V12 H1 Z" fill="#000"/><rect x="2" y="1" width="6" height="4" fill="url(#dy)"/><rect x="8" y="3" width="6" height="2" fill="url(#dy)"/><path d="M0 5 H12 L14.5 11 H2 Z" fill="#000"/><path d="M2 6 H11 L13 11 H3 Z" fill="url(#dy)"/><rect x="15" y="3" width="1" height="8" fill="#909090"/></svg>
<div style="left:707px;top:305px;font-size:11px;line-height:13px;color:#000;white-space:nowrap;letter-spacing:-0.17px;">Bestellung</div>
<div style="left:689px;top:319px;width:1px;height:9px;background:repeating-linear-gradient(to bottom,#A09C90 0 1px,transparent 1px 2px);"></div>
<div style="left:691px;top:327px;width:14px;height:1px;background:repeating-linear-gradient(to right,#A09C90 0 1px,transparent 1px 2px);"></div>
<svg style="left:705px;top:320px" width="17" height="13" viewBox="0 0 17 13" shape-rendering="crispEdges"><path d="M0 3 H1 V1 H2 V0 H7 V1 H8 V3 H14 V12 H0 Z" fill="#A8A8B0"/><rect x="2" y="1" width="6" height="2" fill="url(#dy)"/><rect x="1" y="3" width="14" height="10" fill="#000"/><rect x="2" y="4" width="12" height="8" fill="url(#dy)"/><rect x="15" y="5" width="1" height="4" fill="#909090"/></svg>
<div style="left:736px;top:321px;font-size:11px;line-height:13px;color:#000;white-space:nowrap;letter-spacing:-0.17px;">...</div>
<div style="left:656px;top:339px;width:9px;height:9px;background:#fff;border:1px solid #ACA899;"></div><div style="left:658px;top:343px;width:5px;height:1px;background:#000;"></div>
<div style="left:666px;top:343px;width:10px;height:1px;background:repeating-linear-gradient(to right,#A09C90 0 1px,transparent 1px 2px);"></div>
<svg style="left:676px;top:336px" width="17" height="13" viewBox="0 0 17 13" shape-rendering="crispEdges"><path d="M1 1 H2 V0 H7 V1 H8 V2 H15 V13 H2 V12 H1 Z" fill="#000"/><rect x="2" y="1" width="6" height="4" fill="url(#dy)"/><rect x="8" y="3" width="6" height="2" fill="url(#dy)"/><path d="M0 5 H12 L14.5 11 H2 Z" fill="#000"/><path d="M2 6 H11 L13 11 H3 Z" fill="url(#dy)"/><rect x="15" y="3" width="1" height="8" fill="#909090"/></svg>
<div style="left:707px;top:337px;font-size:11px;line-height:13px;color:#000;white-space:nowrap;letter-spacing:-0.17px;">Wareneingang</div>
<div style="left:689px;top:351px;width:1px;height:25px;background:repeating-linear-gradient(to bottom,#A09C90 0 1px,transparent 1px 2px);"></div>
<div style="left:691px;top:359px;width:14px;height:1px;background:repeating-linear-gradient(to right,#A09C90 0 1px,transparent 1px 2px);"></div>
<svg style="left:705px;top:352px" width="17" height="13" viewBox="0 0 17 13" shape-rendering="crispEdges"><path d="M0 3 H1 V1 H2 V0 H7 V1 H8 V3 H14 V12 H0 Z" fill="#A8A8B0"/><rect x="2" y="1" width="6" height="2" fill="url(#dy)"/><rect x="1" y="3" width="14" height="10" fill="#000"/><rect x="2" y="4" width="12" height="8" fill="url(#dy)"/><rect x="15" y="5" width="1" height="4" fill="#909090"/></svg>
<div style="left:736px;top:353px;font-size:11px;line-height:13px;color:#000;white-space:nowrap;letter-spacing:-0.17px;">...</div>
<div style="left:691px;top:375px;width:14px;height:1px;background:repeating-linear-gradient(to right,#A09C90 0 1px,transparent 1px 2px);"></div>
<svg style="left:705px;top:368px" width="17" height="13" viewBox="0 0 17 13" shape-rendering="crispEdges"><path d="M0 3 H1 V1 H2 V0 H7 V1 H8 V3 H14 V12 H0 Z" fill="#A8A8B0"/><rect x="2" y="1" width="6" height="2" fill="url(#dy)"/><rect x="1" y="3" width="14" height="10" fill="#000"/><rect x="2" y="4" width="12" height="8" fill="url(#dy)"/><rect x="15" y="5" width="1" height="4" fill="#909090"/></svg>
<div style="left:739px;top:369px;font-size:11px;line-height:13px;color:#000;white-space:nowrap;letter-spacing:-0.17px;">300001 05.08.2007</div>
<div style="left:656px;top:387px;width:9px;height:9px;background:#fff;border:1px solid #ACA899;"></div><div style="left:658px;top:391px;width:5px;height:1px;background:#000;"></div>
<div style="left:666px;top:391px;width:10px;height:1px;background:repeating-linear-gradient(to right,#A09C90 0 1px,transparent 1px 2px);"></div>
<svg style="left:676px;top:384px" width="17" height="13" viewBox="0 0 17 13" shape-rendering="crispEdges"><path d="M1 1 H2 V0 H7 V1 H8 V2 H15 V13 H2 V12 H1 Z" fill="#000"/><rect x="2" y="1" width="6" height="4" fill="url(#dy)"/><rect x="8" y="3" width="6" height="2" fill="url(#dy)"/><path d="M0 5 H12 L14.5 11 H2 Z" fill="#000"/><path d="M2 6 H11 L13 11 H3 Z" fill="url(#dy)"/><rect x="15" y="3" width="1" height="8" fill="#909090"/></svg>
<div style="left:707px;top:385px;font-size:11px;line-height:13px;color:#000;white-space:nowrap;letter-spacing:-0.17px;">Inventur</div>
<div style="left:689px;top:399px;width:1px;height:25px;background:repeating-linear-gradient(to bottom,#A09C90 0 1px,transparent 1px 2px);"></div>
<div style="left:691px;top:407px;width:14px;height:1px;background:repeating-linear-gradient(to right,#A09C90 0 1px,transparent 1px 2px);"></div>
<svg style="left:705px;top:400px" width="17" height="13" viewBox="0 0 17 13" shape-rendering="crispEdges"><path d="M0 3 H1 V1 H2 V0 H7 V1 H8 V3 H14 V12 H0 Z" fill="#A8A8B0"/><rect x="2" y="1" width="6" height="2" fill="url(#dy)"/><rect x="1" y="3" width="14" height="10" fill="#000"/><rect x="2" y="4" width="12" height="8" fill="url(#dy)"/><rect x="15" y="5" width="1" height="4" fill="#909090"/></svg>
<div style="left:736px;top:401px;font-size:11px;line-height:13px;color:#000;white-space:nowrap;letter-spacing:-0.17px;">...</div>
<div style="left:691px;top:423px;width:14px;height:1px;background:repeating-linear-gradient(to right,#A09C90 0 1px,transparent 1px 2px);"></div>
<svg style="left:705px;top:416px" width="17" height="13" viewBox="0 0 17 13" shape-rendering="crispEdges"><path d="M0 3 H1 V1 H2 V0 H7 V1 H8 V3 H14 V12 H0 Z" fill="#A8A8B0"/><rect x="2" y="1" width="6" height="2" fill="url(#dy)"/><rect x="1" y="3" width="14" height="10" fill="#000"/><rect x="2" y="4" width="12" height="8" fill="url(#dy)"/><rect x="15" y="5" width="1" height="4" fill="#909090"/></svg>
<svg style="left:720px;top:416px" width="12" height="14" viewBox="0 0 12 14"><path d="M1.5 6.5 L6 12 L10.5 1.5" stroke="#008000" stroke-width="2.4" fill="none"/></svg>
<div style="left:739px;top:417px;font-size:11px;line-height:13px;color:#000;white-space:nowrap;letter-spacing:-0.17px;">400001 31.07.2007</div>
<div style="left:656px;top:435px;width:9px;height:9px;background:#fff;border:1px solid #ACA899;"></div><div style="left:658px;top:439px;width:5px;height:1px;background:#000;"></div>
<div style="left:666px;top:439px;width:10px;height:1px;background:repeating-linear-gradient(to right,#A09C90 0 1px,transparent 1px 2px);"></div>
<svg style="left:676px;top:432px" width="17" height="13" viewBox="0 0 17 13" shape-rendering="crispEdges"><path d="M1 1 H2 V0 H7 V1 H8 V2 H15 V13 H2 V12 H1 Z" fill="#000"/><rect x="2" y="1" width="6" height="4" fill="url(#dy)"/><rect x="8" y="3" width="6" height="2" fill="url(#dy)"/><path d="M0 5 H12 L14.5 11 H2 Z" fill="#000"/><path d="M2 6 H11 L13 11 H3 Z" fill="url(#dy)"/><rect x="15" y="3" width="1" height="8" fill="#909090"/></svg>
<div style="left:707px;top:433px;font-size:11px;line-height:13px;color:#000;white-space:nowrap;letter-spacing:-0.17px;">Etiketten</div>
<div style="left:689px;top:447px;width:1px;height:9px;background:repeating-linear-gradient(to bottom,#A09C90 0 1px,transparent 1px 2px);"></div>
<div style="left:691px;top:455px;width:14px;height:1px;background:repeating-linear-gradient(to right,#A09C90 0 1px,transparent 1px 2px);"></div>
<svg style="left:705px;top:448px" width="17" height="13" viewBox="0 0 17 13" shape-rendering="crispEdges"><path d="M0 3 H1 V1 H2 V0 H7 V1 H8 V3 H14 V12 H0 Z" fill="#A8A8B0"/><rect x="2" y="1" width="6" height="2" fill="url(#dy)"/><rect x="1" y="3" width="14" height="10" fill="#000"/><rect x="2" y="4" width="12" height="8" fill="url(#dy)"/><rect x="15" y="5" width="1" height="4" fill="#909090"/></svg>
<div style="left:736px;top:449px;font-size:11px;line-height:13px;color:#000;white-space:nowrap;letter-spacing:-0.17px;">...</div>
<div style="left:656px;top:467px;width:9px;height:9px;background:#fff;border:1px solid #ACA899;"></div><div style="left:658px;top:471px;width:5px;height:1px;background:#000;"></div>
<div style="left:666px;top:471px;width:10px;height:1px;background:repeating-linear-gradient(to right,#A09C90 0 1px,transparent 1px 2px);"></div>
<svg style="left:676px;top:464px" width="17" height="13" viewBox="0 0 17 13" shape-rendering="crispEdges"><path d="M1 1 H2 V0 H7 V1 H8 V2 H15 V13 H2 V12 H1 Z" fill="#000"/><rect x="2" y="1" width="6" height="4" fill="url(#dy)"/><rect x="8" y="3" width="6" height="2" fill="url(#dy)"/><path d="M0 5 H12 L14.5 11 H2 Z" fill="#000"/><path d="M2 6 H11 L13 11 H3 Z" fill="url(#dy)"/><rect x="15" y="3" width="1" height="8" fill="#909090"/></svg>
<div style="left:707px;top:465px;font-size:11px;line-height:13px;color:#000;white-space:nowrap;letter-spacing:-0.17px;">Eingangs-Rechnung</div>
<div style="left:689px;top:479px;width:1px;height:9px;background:repeating-linear-gradient(to bottom,#A09C90 0 1px,transparent 1px 2px);"></div>
<div style="left:691px;top:487px;width:14px;height:1px;background:repeating-linear-gradient(to right,#A09C90 0 1px,transparent 1px 2px);"></div>
<svg style="left:705px;top:480px" width="17" height="13" viewBox="0 0 17 13" shape-rendering="crispEdges"><path d="M0 3 H1 V1 H2 V0 H7 V1 H8 V3 H14 V12 H0 Z" fill="#A8A8B0"/><rect x="2" y="1" width="6" height="2" fill="url(#dy)"/><rect x="1" y="3" width="14" height="10" fill="#000"/><rect x="2" y="4" width="12" height="8" fill="url(#dy)"/><rect x="15" y="5" width="1" height="4" fill="#909090"/></svg>
<div style="left:736px;top:481px;font-size:11px;line-height:13px;color:#000;white-space:nowrap;letter-spacing:-0.17px;">...</div>
<div style="left:656px;top:499px;width:9px;height:9px;background:#fff;border:1px solid #ACA899;"></div><div style="left:658px;top:503px;width:5px;height:1px;background:#000;"></div>
<div style="left:666px;top:503px;width:10px;height:1px;background:repeating-linear-gradient(to right,#A09C90 0 1px,transparent 1px 2px);"></div>
<svg style="left:676px;top:496px" width="17" height="13" viewBox="0 0 17 13" shape-rendering="crispEdges"><path d="M1 1 H2 V0 H7 V1 H8 V2 H15 V13 H2 V12 H1 Z" fill="#000"/><rect x="2" y="1" width="6" height="4" fill="url(#dy)"/><rect x="8" y="3" width="6" height="2" fill="url(#dy)"/><path d="M0 5 H12 L14.5 11 H2 Z" fill="#000"/><path d="M2 6 H11 L13 11 H3 Z" fill="url(#dy)"/><rect x="15" y="3" width="1" height="8" fill="#909090"/></svg>
<div style="left:707px;top:497px;font-size:11px;line-height:13px;color:#000;white-space:nowrap;letter-spacing:-0.17px;">Rückgabe</div>
<div style="left:689px;top:511px;width:1px;height:9px;background:repeating-linear-gradient(to bottom,#A09C90 0 1px,transparent 1px 2px);"></div>
<div style="left:691px;top:519px;width:14px;height:1px;background:repeating-linear-gradient(to right,#A09C90 0 1px,transparent 1px 2px);"></div>
<svg style="left:705px;top:512px" width="17" height="13" viewBox="0 0 17 13" shape-rendering="crispEdges"><path d="M0 3 H1 V1 H2 V0 H7 V1 H8 V3 H14 V12 H0 Z" fill="#A8A8B0"/><rect x="2" y="1" width="6" height="2" fill="url(#dy)"/><rect x="1" y="3" width="14" height="10" fill="#000"/><rect x="2" y="4" width="12" height="8" fill="url(#dy)"/><rect x="15" y="5" width="1" height="4" fill="#909090"/></svg>
<div style="left:736px;top:513px;font-size:11px;line-height:13px;color:#000;white-space:nowrap;letter-spacing:-0.17px;">...</div>
<div style="left:656px;top:531px;width:9px;height:9px;background:#fff;border:1px solid #ACA899;"></div><div style="left:658px;top:535px;width:5px;height:1px;background:#000;"></div>
<div style="left:666px;top:535px;width:10px;height:1px;background:repeating-linear-gradient(to right,#A09C90 0 1px,transparent 1px 2px);"></div>
<svg style="left:676px;top:528px" width="17" height="13" viewBox="0 0 17 13" shape-rendering="crispEdges"><path d="M1 1 H2 V0 H7 V1 H8 V2 H15 V13 H2 V12 H1 Z" fill="#000"/><rect x="2" y="1" width="6" height="4" fill="url(#dy)"/><rect x="8" y="3" width="6" height="2" fill="url(#dy)"/><path d="M0 5 H12 L14.5 11 H2 Z" fill="#000"/><path d="M2 6 H11 L13 11 H3 Z" fill="url(#dy)"/><rect x="15" y="3" width="1" height="8" fill="#909090"/></svg>
<div style="left:707px;top:529px;font-size:11px;line-height:13px;color:#000;white-space:nowrap;letter-spacing:-0.17px;">Lager-Umbuchung</div>
<div style="left:689px;top:543px;width:1px;height:25px;background:repeating-linear-gradient(to bottom,#A09C90 0 1px,transparent 1px 2px);"></div>
<div style="left:691px;top:551px;width:14px;height:1px;background:repeating-linear-gradient(to right,#A09C90 0 1px,transparent 1px 2px);"></div>
<svg style="left:705px;top:544px" width="17" height="13" viewBox="0 0 17 13" shape-rendering="crispEdges"><path d="M0 3 H1 V1 H2 V0 H7 V1 H8 V3 H14 V12 H0 Z" fill="#A8A8B0"/><rect x="2" y="1" width="6" height="2" fill="url(#dy)"/><rect x="1" y="3" width="14" height="10" fill="#000"/><rect x="2" y="4" width="12" height="8" fill="url(#dy)"/><rect x="15" y="5" width="1" height="4" fill="#909090"/></svg>
<div style="left:736px;top:545px;font-size:11px;line-height:13px;color:#000;white-space:nowrap;letter-spacing:-0.17px;">...</div>
<div style="left:691px;top:567px;width:14px;height:1px;background:repeating-linear-gradient(to right,#A09C90 0 1px,transparent 1px 2px);"></div>
<div style="left:734px;top:559px;width:113px;height:16px;background:#ECE9D8;"></div>
<svg style="left:704px;top:557px" width="28" height="17" viewBox="0 0 28 17"><path d="M2 7 L10 2.5 L16 2.5 L18 4 L13 9 L7 9 Z" fill="#fff" stroke="#606060" stroke-width="0.8"/><path d="M1 8 L7 6 L17 6.5 L17 13 L10 16 L1 12 Z" fill="#D4D4D4"/><path d="M9 11 L17 8 L17 13 L10 16 Z" fill="#A0A0A0"/><path d="M1 12.5 L7 15.5 L10 15.5 L17 12.5" stroke="#000" stroke-width="1.2" fill="none"/><rect x="12" y="6" width="2" height="2" fill="#000"/><rect x="4" y="8" width="3" height="2" fill="#00E000"/><rect x="7" y="9" width="3" height="2" fill="#F00000"/><path d="M18.5 4.5 L25.5 15 M25.5 4.5 L18.5 15" stroke="#800000" stroke-width="2.4"/></svg>
<div style="left:739px;top:561px;font-size:11px;line-height:13px;color:#000;white-space:nowrap;letter-spacing:-0.17px;">99000001 18.08.2007</div>
</body></html>
